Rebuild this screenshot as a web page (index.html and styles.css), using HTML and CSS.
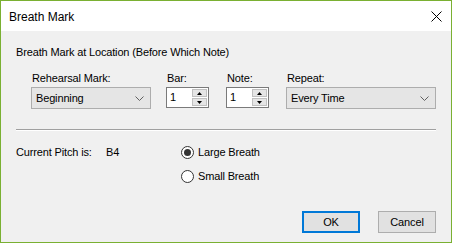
FILE: index.html
```html
<!DOCTYPE html>
<html lang="en">
<head>
    <meta charset="UTF-8">
    <title>Breath Mark</title>
    <link rel="stylesheet" href="styles.css">
</head>
<body>
    <div class="window">
        <!-- title bar -->
        <div class="titlebar">
            <span class="title">Breath Mark</span>
            <svg class="close" width="11" height="11" viewBox="0 0 11 11">
                <path d="M0.5 0.5 L10.5 10.5 M10.5 0.5 L0.5 10.5" stroke="#000" stroke-width="1" fill="none"/>
            </svg>
        </div>

        <div class="content">
            <div class="heading">Breath Mark at Location (Before Which Note)</div>

            <div class="fields">
                <div class="field f-rehearsal">
                    <div class="label">Rehearsal Mark:</div>
                    <div class="combo w-rehearsal">
                        <span>Beginning</span>
                        <svg width="9" height="5" viewBox="0 0 9 5"><path d="M0.5 0.5 L4.5 4.5 L8.5 0.5" stroke="#606060" fill="none"/></svg>
                    </div>
                </div>
                <div class="field f-bar">
                    <div class="label">Bar:</div>
                    <div class="spin">
                        <div class="spin-value">1</div>
                        <div class="spin-btns">
                            <div class="spin-btn"><svg width="5" height="3" viewBox="0 0 5 3"><path d="M2.5 0 L5 3 L0 3 Z" fill="#000"/></svg></div>
                            <div class="spin-btn"><svg width="5" height="3" viewBox="0 0 5 3"><path d="M0 0 L5 0 L2.5 3 Z" fill="#000"/></svg></div>
                        </div>
                    </div>
                </div>
                <div class="field f-note">
                    <div class="label">Note:</div>
                    <div class="spin">
                        <div class="spin-value">1</div>
                        <div class="spin-btns">
                            <div class="spin-btn"><svg width="5" height="3" viewBox="0 0 5 3"><path d="M2.5 0 L5 3 L0 3 Z" fill="#000"/></svg></div>
                            <div class="spin-btn"><svg width="5" height="3" viewBox="0 0 5 3"><path d="M0 0 L5 0 L2.5 3 Z" fill="#000"/></svg></div>
                        </div>
                    </div>
                </div>
                <div class="field f-repeat">
                    <div class="label">Repeat:</div>
                    <div class="combo w-repeat">
                        <span>Every Time</span>
                        <svg width="9" height="5" viewBox="0 0 9 5"><path d="M0.5 0.5 L4.5 4.5 L8.5 0.5" stroke="#606060" fill="none"/></svg>
                    </div>
                </div>
            </div>

            <div class="separator"></div>

            <div class="pitch-row">
                <div class="pitch-label">Current Pitch is:</div>
                <div class="pitch-value">B4</div>
                <div class="radios">
                    <label class="radio"><span class="dot checked"></span>Large Breath</label>
                    <label class="radio"><span class="dot"></span>Small Breath</label>
                </div>
            </div>

            <div class="buttons">
                <div class="btn btn-default">OK</div>
                <div class="btn">Cancel</div>
            </div>
        </div>
    </div>
</body>
</html>
```

FILE: styles.css
```css
body {
    margin: 0;
    font-family: "Liberation Sans", Arial, sans-serif;
    font-size: 11px;
    color: #000;
}
.window {
    width: 452px;
    height: 243px;
    box-sizing: border-box;
    border: 1px solid #7ab032;
    background-color: #f0f0f0;
    display: flex;
    flex-direction: column;
}
.titlebar {
    height: 30px;
    background-color: #fff;
    display: flex;
    align-items: center;
    padding-left: 8px;
    padding-right: 9px;
}
.title {
    font-size: 12px;
    flex: 1;
    padding-top: 1px;
}
.close {
    display: block;
}
.content {
    padding: 0 15px;
    flex: 1;
    display: flex;
    flex-direction: column;
    letter-spacing: -0.15px;
}
.heading {
    margin-top: 15px;
    line-height: 13px;
}
.fields {
    display: flex;
    margin-top: 13px;
    padding-left: 15px;
}
.label {
    line-height: 13px;
    padding-left: 1px;
    margin-bottom: 2px;
}
.f-bar {
    margin-left: 15px;
}
.f-note {
    margin-left: 17px;
}
.f-repeat {
    margin-left: 17px;
}
.combo {
    height: 22px;
    box-sizing: border-box;
    border: 1px solid #adadad;
    background-color: #e5e5e5;
    display: flex;
    align-items: center;
    justify-content: space-between;
    padding: 0 6px 0 4px;
}
.combo svg {
    display: block;
}
.w-rehearsal {
    width: 120px;
}
.w-repeat {
    width: 150px;
}
.spin {
    width: 43px;
    height: 21px;
    box-sizing: border-box;
    border: 1px solid #7a7a7a;
    background-color: #fff;
    display: flex;
}
.spin-value {
    flex: 1;
    padding-left: 3px;
    line-height: 19px;
}
.spin-btns {
    width: 15px;
    display: flex;
    flex-direction: column;
    padding: 1px;
    gap: 1px;
}
.spin-btn {
    flex: 1;
    background-color: #e5e5e5;
    border: 1px solid #c0c0c0;
    display: flex;
    align-items: center;
    justify-content: center;
}
.spin-btn svg {
    display: block;
}
.separator {
    margin-top: 20px;
    height: 1px;
    width: 420px;
    background-color: #a0a0a0;
    border-bottom: 1px solid #fff;
}
.pitch-row {
    display: flex;
    margin-top: 15px;
}
.pitch-label {
    width: 90px;
    line-height: 13px;
}
.pitch-value {
    width: 75px;
    line-height: 13px;
}
.radios {
    display: flex;
    flex-direction: column;
    gap: 10px;
    margin-top: -1px;
}
.radio {
    display: flex;
    align-items: center;
    line-height: 14px;
}
.dot {
    width: 13px;
    height: 13px;
    box-sizing: border-box;
    border: 1px solid #333;
    border-radius: 50%;
    background-color: #fff;
    margin-right: 4px;
    position: relative;
}
.dot.checked::after {
    content: "";
    position: absolute;
    left: 2px;
    top: 2px;
    width: 7px;
    height: 7px;
    border-radius: 50%;
    background-color: #333;
}
.buttons {
    display: flex;
    justify-content: flex-end;
    gap: 18px;
    margin-top: auto;
    margin-bottom: 9px;
}
.btn {
    width: 58px;
    height: 22px;
    box-sizing: border-box;
    border: 1px solid #adadad;
    background-color: #e1e1e1;
    display: flex;
    align-items: center;
    justify-content: center;
}
.btn-default {
    border: 2px solid #0078d7;
}
```
